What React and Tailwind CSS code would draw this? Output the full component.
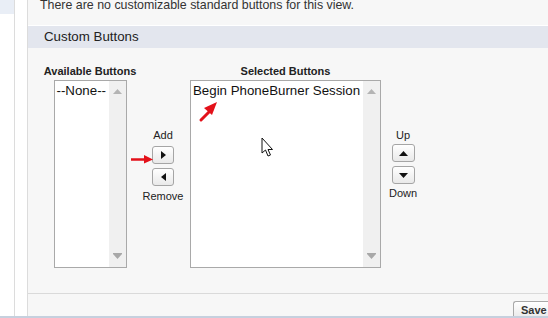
const Tri = ({ dir }) => {
  const pts = {
    right: '0,0 5,4 0,8',
    left: '5,0 0,4 5,8',
    up: '0,5 4.5,0 9,5',
    down: '0,0 4.5,5 9,0',
  };
  const size = dir === 'left' || dir === 'right' ? { w: 5, h: 8 } : { w: 9, h: 5 };
  return (
    <svg width={size.w} height={size.h} viewBox={`0 0 ${size.w} ${size.h}`}>
      <polygon points={pts[dir]} fill="#111" />
    </svg>
  );
};

const ArrowButton = ({ dir, w = 'w-[22px]' }) => (
  <button className={`${w} h-[18px] flex items-center justify-center rounded-[3px] border border-[#a5a5a5] bg-gradient-to-b from-white to-[#e9e9e9]`}>
    <Tri dir={dir} />
  </button>
);

const ListBox = ({ width, children }) => (
  <div className={`${width} h-[188px] border border-[#a9a9a9] bg-white flex`}>
    <div className="flex-1 pl-[2px] pt-[2px] text-[13.3px] leading-[16px] text-[#111] whitespace-nowrap overflow-hidden">
      {children}
    </div>
    <div className="w-[17px] bg-[#f0f0f0] flex flex-col items-center justify-between pt-[8px] pb-[8px]">
      <svg width="9" height="5" viewBox="0 0 9 5">
        <polygon points="0,5 4.5,0 9,5" fill="#b4b4b4" />
      </svg>
      <svg width="9" height="6" viewBox="0 0 9 6">
        <rect x="0" y="0" width="9" height="1" fill="#a8a8a8" />
        <polygon points="0,1 4.5,6 9,1" fill="#a8a8a8" />
      </svg>
    </div>
  </div>
);

export default function App() {
  return (
    <div className="w-[548px] h-[318px] flex flex-col overflow-hidden relative font-['Liberation_Sans',Arial,sans-serif] text-[#333]">
      <div className="flex flex-1 min-h-0">
        {/* left nav strips */}
        <div className="w-[15px] bg-white border-r border-[#dcdcdc] flex flex-col">
          <div className="h-[14px] bg-[#e9eef6]" />
        </div>
        <div className="w-[13px] bg-white border-r border-[#dcdcdc]" />

        {/* main */}
        <div className="flex-1 bg-[#f7f7f7] flex flex-col min-w-0">
          <div className="h-[26px] pl-[12px] text-[12.4px] leading-[13px] -mt-[1px] text-[#333] whitespace-nowrap">
            There are no customizable standard buttons for this view.
          </div>
          <div className="h-[1px] bg-white" />
          <div className="h-[22px] bg-[#e3e6ee] pl-[16px] flex items-center text-[13.3px] text-[#222]">
            Custom Buttons
          </div>

          <div className="flex items-start pl-[12px] pt-[17px] h-[245px]">
            <div className="w-[100px] flex flex-col items-center">
              <div className="text-[11px] leading-[12px] font-bold text-[#222] h-[15px] whitespace-nowrap">Available Buttons</div>
              <ListBox width="w-[73px]">--None--</ListBox>
            </div>

            <div className="w-[46px] flex flex-col items-center mt-[64px] text-[11px] leading-[12px] text-[#222]">
              <div className="mb-[5px]">Add</div>
              <ArrowButton dir="right" />
              <div className="h-[4px]" />
              <ArrowButton dir="left" />
              <div className="mt-[4px]">Remove</div>
            </div>

            <div className="w-[199px] flex flex-col items-center">
              <div className="text-[11px] leading-[12px] font-bold text-[#222] h-[15px] whitespace-nowrap">Selected Buttons</div>
              <ListBox width="w-[191px]">Begin PhoneBurner Session</ListBox>
            </div>

            <div className="w-[36px] flex flex-col items-center mt-[64px] text-[11px] leading-[12px] text-[#222]">
              <div className="mb-[3px]">Up</div>
              <ArrowButton dir="up" w="w-[23px]" />
              <div className="h-[4px]" />
              <ArrowButton dir="down" w="w-[23px]" />
              <div className="mt-[3px]">Down</div>
            </div>
          </div>

          <div className="h-[1px] bg-[#dadada]" />
          <div className="flex-1 flex justify-end items-end">
            <div className="w-[35px] h-[15px] border-t border-l border-[#a9a9a9] rounded-tl-[3px] bg-gradient-to-b from-white to-[#ececec] pl-[7px] pt-[1px] text-[11px] leading-[14px] font-bold text-[#333]">
              Save
            </div>
          </div>
        </div>
      </div>
      <div className="h-[2px] bg-[#c6d0de]" />

      {/* annotations */}
      <svg className="absolute left-0 top-0 pointer-events-none" width="548" height="318">
        <line x1="131" y1="159.5" x2="146" y2="159.5" stroke="#e3111a" strokeWidth="2.5" />
        <polygon points="144,155 153,159.5 144,163.5" fill="#e3111a" />
        <line x1="201" y1="120" x2="209" y2="112" stroke="#e3111a" strokeWidth="3" strokeLinecap="round" />
        <polygon points="204,108 217,102 212,115" fill="#e3111a" />
        <path d="M262 138 L262 153 L265.5 150 L268 156 L270.5 155 L268 149.5 L272.5 149.5 Z" fill="white" stroke="#111" strokeWidth="1" strokeLinejoin="round" />
      </svg>
    </div>
  );
}
